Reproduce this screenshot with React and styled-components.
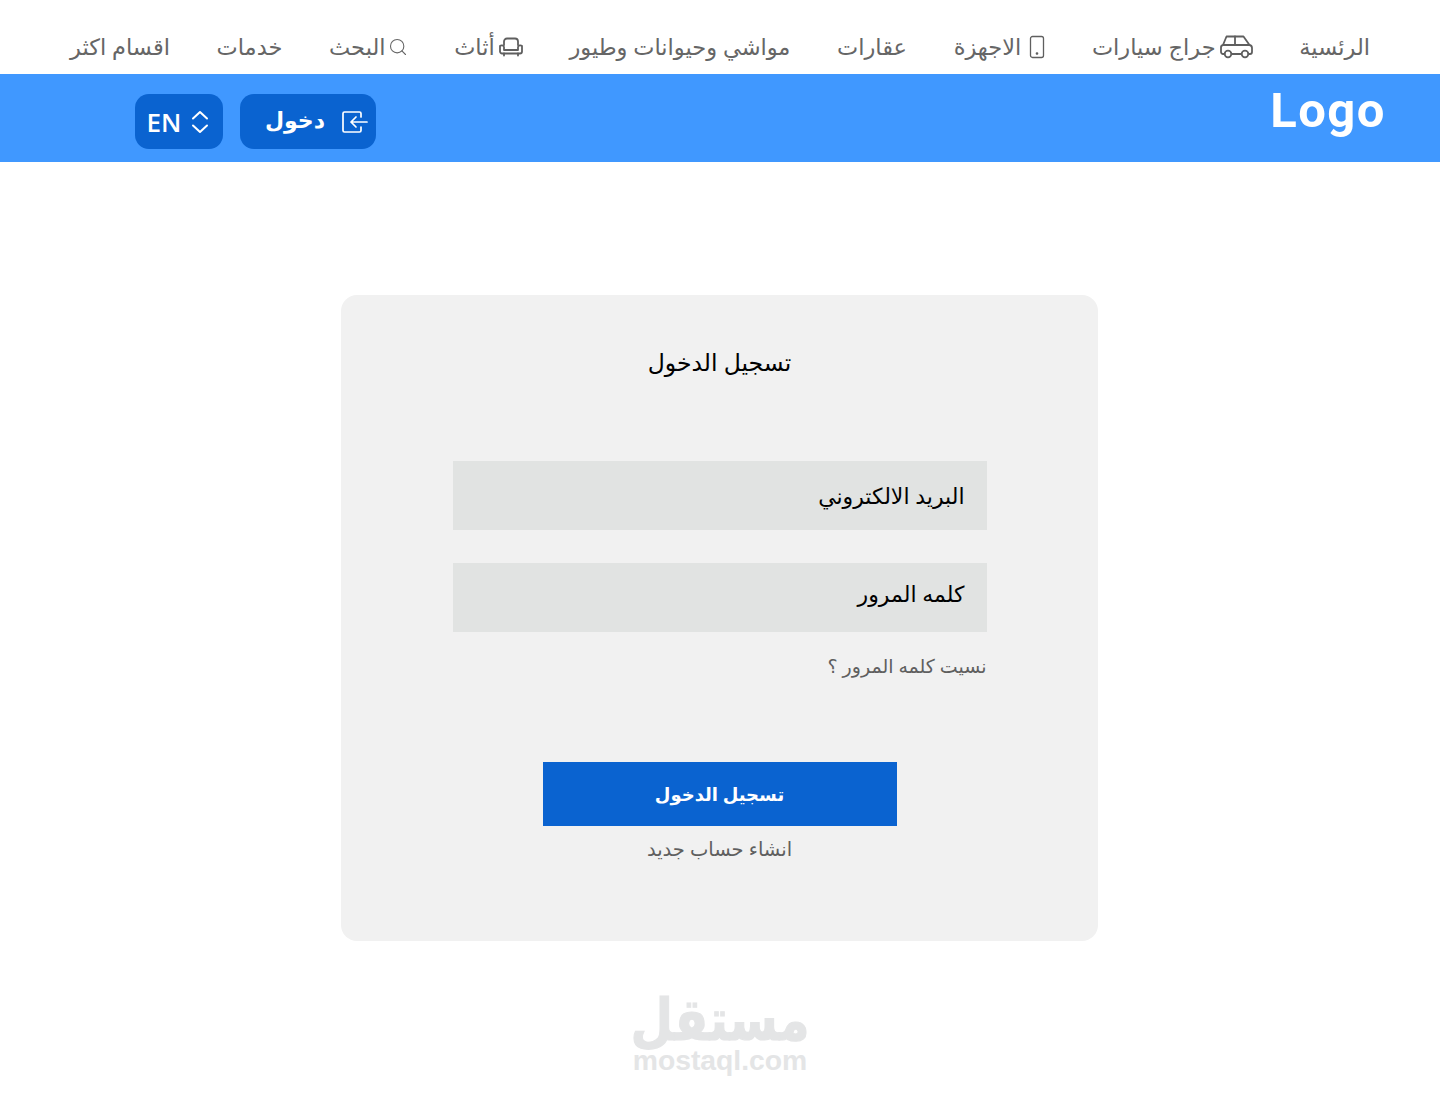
import styled, { createGlobalStyle } from "styled-components";
import { LuSearch } from "react-icons/lu";

const GlobalStyle = createGlobalStyle`
  html, body {
    margin: 0;
    padding: 0;
    background: #ffffff;
    font-family: "Noto Sans", "DejaVu Sans", sans-serif;
  }
`;

const CarIcon = () => (
  <svg width="33" height="24" viewBox="0 0 33 24" fill="none" stroke="#5f5f5f" strokeWidth="1.8" strokeLinejoin="round" strokeLinecap="round">
    <path d="M4.500 19H3a2 2 0 0 1-2-2v-4.500a2.500 2.500 0 0 1 2-2.500l3.500-8.500h17l6 8.500a3 3 0 0 1 2.500 3V17a2 2 0 0 1-2 2h-1.500" />
    <path d="M12 19h9M3.500 10h26M15 1.500V10" />
    <circle cx="8" cy="19" r="3.300" />
    <circle cx="25" cy="19" r="3.300" />
  </svg>
);

const PhoneIcon = () => (
  <svg width="16" height="24" viewBox="0 0 16 24" fill="none" stroke="#5f5f5f" strokeWidth="1.300">
    <rect x="1.500" y="1.500" width="13" height="21" rx="2" />
    <circle cx="8" cy="18.500" r="0.700" fill="#5f5f5f" />
  </svg>
);

const SofaIcon = () => (
  <svg width="24" height="20" viewBox="0 0 24 20" fill="none" stroke="#5f5f5f" strokeWidth="1.800" strokeLinejoin="round" strokeLinecap="round">
    <path d="M5 8V4.500a3 3 0 0 1 3-3h8a3 3 0 0 1 3 3V8" />
    <path d="M5 13h14V10a2.500 2.500 0 0 1 4-1v5.500a2 2 0 0 1-2 2H3a2 2 0 0 1-2-2V9a2.500 2.500 0 0 1 4 1z" />
    <path d="M5 16.500V18.500M19 16.500V18.500" />
  </svg>
);

const LoginIcon = () => (
  <svg width="27" height="24" viewBox="0 0 27 24" fill="none" stroke="#ffffff" strokeWidth="1.700" strokeLinejoin="round" strokeLinecap="round">
    <path d="M20 7V3.500A1.500 1.500 0 0 0 18.500 2h-15A1.500 1.500 0 0 0 2 3.500v17A1.500 1.500 0 0 0 3.500 22h15a1.500 1.500 0 0 0 1.500-1.500V17" />
    <path d="M26 12H10M15 7l-5 5 5 5" />
  </svg>
);

const UpDownIcon = () => (
  <svg width="18" height="24" viewBox="0 0 18 24" fill="none" stroke="#ffffff" strokeWidth="2" strokeLinejoin="round" strokeLinecap="round">
    <path d="M2 8.500L9 2l7 6.500M2 15.500L9 22l7-6.500" />
  </svg>
);

const navItems = [
  { label: "الرئسية" },
  { label: "جراج سيارات", icon: <CarIcon />, gap: 4 },
  { label: "الاجهزة", icon: <PhoneIcon />, gap: 8 },
  { label: "عقارات" },
  { label: "مواشي وحيوانات وطيور" },
  { label: "أثاث", icon: <SofaIcon />, gap: 4 },
  { label: "البحث", icon: <LuSearch size={20} strokeWidth={1.3} />, gap: 2 },
  { label: "خدمات" },
  { label: "اقسام اكثر" },
];

function App() {
  return (
    <Page dir="rtl">
      <GlobalStyle />
      <Nav>
        {navItems.map((item) => (
          <NavItem key={item.label} $gap={item.gap}>
            {item.icon}
            <span>{item.label}</span>
          </NavItem>
        ))}
      </Nav>
      <Header>
        <Logo dir="ltr">Logo</Logo>
        <Actions>
          <LoginButton>
            <LoginIcon />
            <span>دخول</span>
          </LoginButton>
          <LangButton dir="ltr">
            EN
            <UpDownIcon />
          </LangButton>
        </Actions>
      </Header>
      <Main>
        <Card>
          <Title>تسجيل الدخول</Title>
          <Form>
            <Field $lineHeight={69}>البريد الالكتروني</Field>
            <Field $lineHeight={61}>كلمه المرور</Field>
            <Forgot>نسيت كلمه المرور ؟</Forgot>
            <SubmitArea>
              <Submit>تسجيل الدخول</Submit>
              <Register>انشاء حساب جديد</Register>
            </SubmitArea>
          </Form>
        </Card>
      </Main>
      <Watermark>
        <WatermarkAr>مستقل</WatermarkAr>
        <WatermarkEn>mostaql.com</WatermarkEn>
      </Watermark>
    </Page>
  );
}

const Page = styled.div`
  width: 1440px;
  height: 1098px;
  overflow: hidden;
  background: #ffffff;
`;

const Nav = styled.nav`
  height: 74px;
  box-sizing: border-box;
  padding: 19px 70px 0 70px;
  display: flex;
  justify-content: space-between;
  align-items: center;
`;

const NavItem = styled.a`
  display: flex;
  align-items: center;
  gap: ${(p) => (p.$gap ? p.$gap : 0)}px;
  font-size: 22.5px;
  line-height: 30px;
  color: #666666;
  white-space: nowrap;
`;

const Header = styled.header`
  height: 88px;
  background: #4098ff;
  display: flex;
  justify-content: space-between;
  align-items: flex-start;
  padding: 0 54px 0 135px;
`;

const Logo = styled.div`
  font-family: Roboto, "Liberation Sans", sans-serif;
  font-weight: 700;
  font-size: 49px;
  letter-spacing: 1.500px;
  line-height: 55px;
  margin-top: 9px;
  color: #ffffff;
`;

const Actions = styled.div`
  display: flex;
  gap: 17px;
  margin-top: 20px;
`;

const LoginButton = styled.button`
  width: 136px;
  height: 55px;
  border: 0;
  border-radius: 14px;
  background: #0a63d0;
  color: #ffffff;
  font: 700 22px "Noto Sans", "DejaVu Sans", sans-serif;
  display: flex;
  align-items: center;
  justify-content: flex-start;
  gap: 16px;
  padding: 0 8px 0 0;

  span {
    margin-top: -6px;
  }
`;

const LangButton = styled.button`
  width: 88px;
  height: 55px;
  border: 0;
  border-radius: 14px;
  background: #0a63d0;
  color: #ffffff;
  font: 600 26px "Open Sans", "Noto Sans", sans-serif;
  display: flex;
  align-items: center;
  justify-content: center;
  gap: 10px;
  padding: 0 2px 0 0;
`;

const Main = styled.main`
  display: flex;
  justify-content: center;
  padding-top: 133px;
`;

const Card = styled.section`
  width: 757px;
  height: 646px;
  box-sizing: border-box;
  margin-right: 1px;
  background: #f1f1f1;
  border-radius: 16px;
  padding-top: 49px;
`;

const Title = styled.h1`
  margin: 0;
  font-size: 23.5px;
  font-weight: 400;
  line-height: 36px;
  text-align: center;
  color: #000000;
`;

const Form = styled.div`
  width: 534px;
  margin: 81px auto 0;
  display: flex;
  flex-direction: column;
`;

const Field = styled.div`
  height: 69px;
  box-sizing: border-box;
  padding: 0 22px;
  margin-bottom: 33px;
  background: #e1e3e2;
  color: #000000;
  font-size: 22px;
  line-height: ${(p) => p.$lineHeight}px;
`;

const Forgot = styled.a`
  margin-top: -14px;
  font-size: 19px;
  line-height: 30px;
  color: #5f5f5f;
`;

const SubmitArea = styled.div`
  margin-top: 81px;
  display: flex;
  flex-direction: column;
  align-items: center;
`;

const Submit = styled.button`
  width: 354px;
  height: 64px;
  border: 0;
  background: #0a63d0;
  color: #ffffff;
  font: 700 18px "Noto Sans", "DejaVu Sans", sans-serif;
`;

const Register = styled.a`
  margin-top: 8px;
  font-size: 19.500px;
  line-height: 30px;
  color: #5f5f5f;
`;

const Watermark = styled.div`
  margin-top: 50px;
  display: flex;
  flex-direction: column;
  align-items: center;
  color: #e4e5e6;
`;

const WatermarkAr = styled.div`
  font-size: 49px;
  font-weight: 700;
  line-height: 54px;
  -webkit-text-stroke: 1px #e4e5e6;
  transform: scaleY(1.18);
`;

const WatermarkEn = styled.div`
  font-family: "Liberation Sans", Arial, sans-serif;
  font-weight: 700;
  font-size: 28.300px;
  line-height: 28px;
  margin-top: 1px;
  direction: ltr;
`;

export default App;
